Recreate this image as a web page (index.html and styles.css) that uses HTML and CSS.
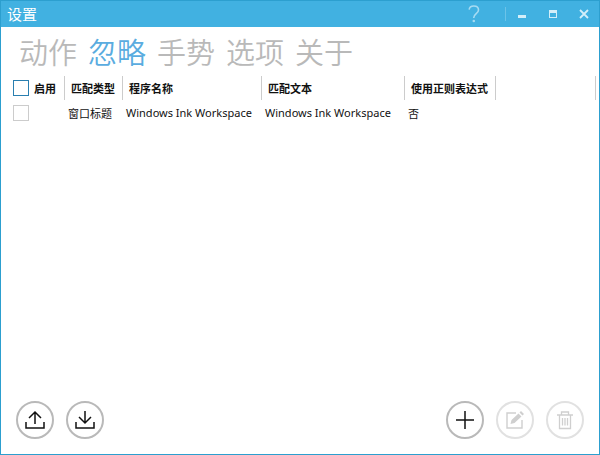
FILE: index.html
```html
<!DOCTYPE html>
<html lang="zh-CN">
<head>
    <meta charset="UTF-8">
    <title>设置</title>
    <link rel="stylesheet" href="styles.css">
</head>
<body>
    <div class="window">
        <header class="titlebar">
            <h1>设置</h1>
            <div class="window-buttons">
                <button class="help" aria-label="帮助">
                    <svg width="12" height="18" viewBox="0 0 12 18"><path d="M1.200 4.600C1.400 2.300 3.200 1 5.800 1c2.800 0 4.700 1.500 4.700 3.900 0 3.600-4.700 3.700-4.700 7.600v.5" fill="none" stroke="currentColor" stroke-width="1.600"/><circle cx="5.800" cy="16" r="1.300" fill="currentColor"/></svg>
                </button>
                <button class="minimize" aria-label="最小化">
                    <svg width="10" height="10" viewBox="0 0 10 10"><path d="M1 6h8v3H1z" fill="currentColor"/></svg>
                </button>
                <button aria-label="最大化">
                    <svg width="10" height="10" viewBox="0 0 10 10"><path d="M1 1h8v8H1zM2 4v4h6V4z" fill="currentColor" fill-rule="evenodd"/></svg>
                </button>
                <button aria-label="关闭">
                    <svg width="10" height="10" viewBox="0 0 10 10"><path d="M1 1l8 8M9 1L1 9" stroke="currentColor" stroke-width="1.800"/></svg>
                </button>
            </div>
        </header>

        <nav class="tabs">
            <button>动作</button>
            <button class="active">忽略</button>
            <button>手势</button>
            <button>选项</button>
            <button>关于</button>
        </nav>

        <main>
            <table>
                <colgroup>
                    <col class="col-enabled">
                    <col class="col-type">
                    <col class="col-name">
                    <col class="col-text">
                    <col class="col-regex">
                    <col>
                </colgroup>
                <thead>
                    <tr>
                        <th><label class="check"><input type="checkbox" class="check-all">启用</label></th>
                        <th>匹配类型</th>
                        <th>程序名称</th>
                        <th>匹配文本</th>
                        <th>使用正则表达式</th>
                        <th></th>
                    </tr>
                </thead>
                <tbody>
                    <tr>
                        <td><label class="check"><input type="checkbox" aria-label="启用 Windows Ink Workspace"></label></td>
                        <td>窗口标题</td>
                        <td>Windows Ink Workspace</td>
                        <td>Windows Ink Workspace</td>
                        <td>否</td>
                        <td></td>
                    </tr>
                </tbody>
            </table>
        </main>

        <footer class="toolbar">
            <button aria-label="导出">
                <svg width="20" height="20" viewBox="0 0 20 20"><path d="M1 12v6h18v-6M10 14V2M4 8l6-6 6 6" fill="none" stroke="currentColor" stroke-width="1.500"/></svg>
            </button>
            <button aria-label="导入">
                <svg width="20" height="20" viewBox="0 0 20 20"><path d="M1 12v6h18v-6M10 1v12M4 7l6 6 6-6" fill="none" stroke="currentColor" stroke-width="1.500"/></svg>
            </button>
            <button class="add" aria-label="添加">
                <svg width="20" height="20" viewBox="0 0 20 20"><path d="M10 1v18M1 10h18" stroke="currentColor" stroke-width="1.500"/></svg>
            </button>
            <button disabled aria-label="编辑">
                <svg width="20" height="20" viewBox="0 0 20 20"><path d="M11 3H2v15h15V10" fill="none" stroke="currentColor" stroke-width="1.400"/><path d="M5.500 14l1-4 7-6.500 3 3-7 6.500zM14.500 2.500L16 1l3 3-1.500 1.500z" fill="currentColor"/></svg>
            </button>
            <button disabled aria-label="删除">
                <svg width="20" height="20" viewBox="0 0 20 20"><path d="M2 5h16M6.500 5V2h7v3M4.500 5v13.500h11V5M7.500 8v7.500M10 8v7.500M12.500 8v7.500" fill="none" stroke="currentColor" stroke-width="1.300"/></svg>
            </button>
        </footer>
    </div>
</body>
</html>
```
FILE: styles.css
```css
* {
    box-sizing: border-box;
}

body {
    margin: 0;
    font-family: "Noto Sans", "Noto Sans CJK SC", sans-serif;
    font-size: 11px;
    color: #111;
}

button {
    padding: 0;
    border: none;
    background: none;
    color: inherit;
    font-family: inherit;
}

svg {
    display: block;
}

.window {
    display: flex;
    flex-direction: column;
    min-height: 100vh;
    border: 1px solid #2c9fcf;
    background: white;
}

/* title bar */
.titlebar {
    display: flex;
    justify-content: space-between;
    align-items: center;
    height: 26px;
    padding: 0 10px 0 6px;
    background: #41b1e1;
    color: white;
}

.titlebar h1 {
    margin: 0;
    font-size: 15px;
    font-weight: 400;
    line-height: 26px;
}

.window-buttons {
    display: flex;
    align-items: center;
    gap: 21px;
    color: #d3eef9;
}

.help {
    margin-right: 4px;
    color: #a6dbf2;
}

.minimize {
    padding: 2px 0 2px 11px;
    border-left: 1px solid #6cc3e8;
}

/* tabs */
.tabs {
    display: flex;
    gap: 11px;
    padding: 4px 18px 0;
}

.tabs button {
    color: #b9b9b9;
    font-family: "Noto Sans CJK SC", sans-serif;
    font-size: 29px;
    font-weight: 350;
    line-height: 40px;
}

.tabs .active {
    color: #5aace0;
}

/* ignored programs */
main {
    flex: 1;
    padding: 5px 3px 0 11px;
}

table {
    width: 100%;
    table-layout: fixed;
    border-collapse: separate;
    border-spacing: 0;
    text-align: left;
    white-space: nowrap;
}

.col-enabled { width: 53px; }
.col-type { width: 58px; }
.col-name { width: 139px; }
.col-text { width: 143px; }
.col-regex { width: 91px; }

th {
    height: 24px;
    padding: 0 0 0 6px;
    border-right: 1px solid #ccc;
}

td {
    height: 25px;
    padding: 0 0 0 3px;
}

th:first-child,
td:first-child {
    padding-left: 1px;
}

.check {
    display: flex;
    align-items: center;
    gap: 5px;
}

.check input {
    appearance: none;
    width: 16px;
    height: 16px;
    margin: 0;
    border: 1px solid #ccc;
    background: white;
}

.check .check-all {
    border-color: #2a7fb0;
}

/* bottom toolbar */
.toolbar {
    display: flex;
    gap: 12px;
    padding: 0 15px 15px;
}

.toolbar button {
    display: flex;
    justify-content: center;
    align-items: center;
    width: 38px;
    height: 38px;
    border: 2px solid #b9b9b9;
    border-radius: 50%;
}

.toolbar .add {
    margin-left: auto;
}

.toolbar button:disabled {
    border-color: #e1e1e1;
    color: #cfcfcf;
}
```
